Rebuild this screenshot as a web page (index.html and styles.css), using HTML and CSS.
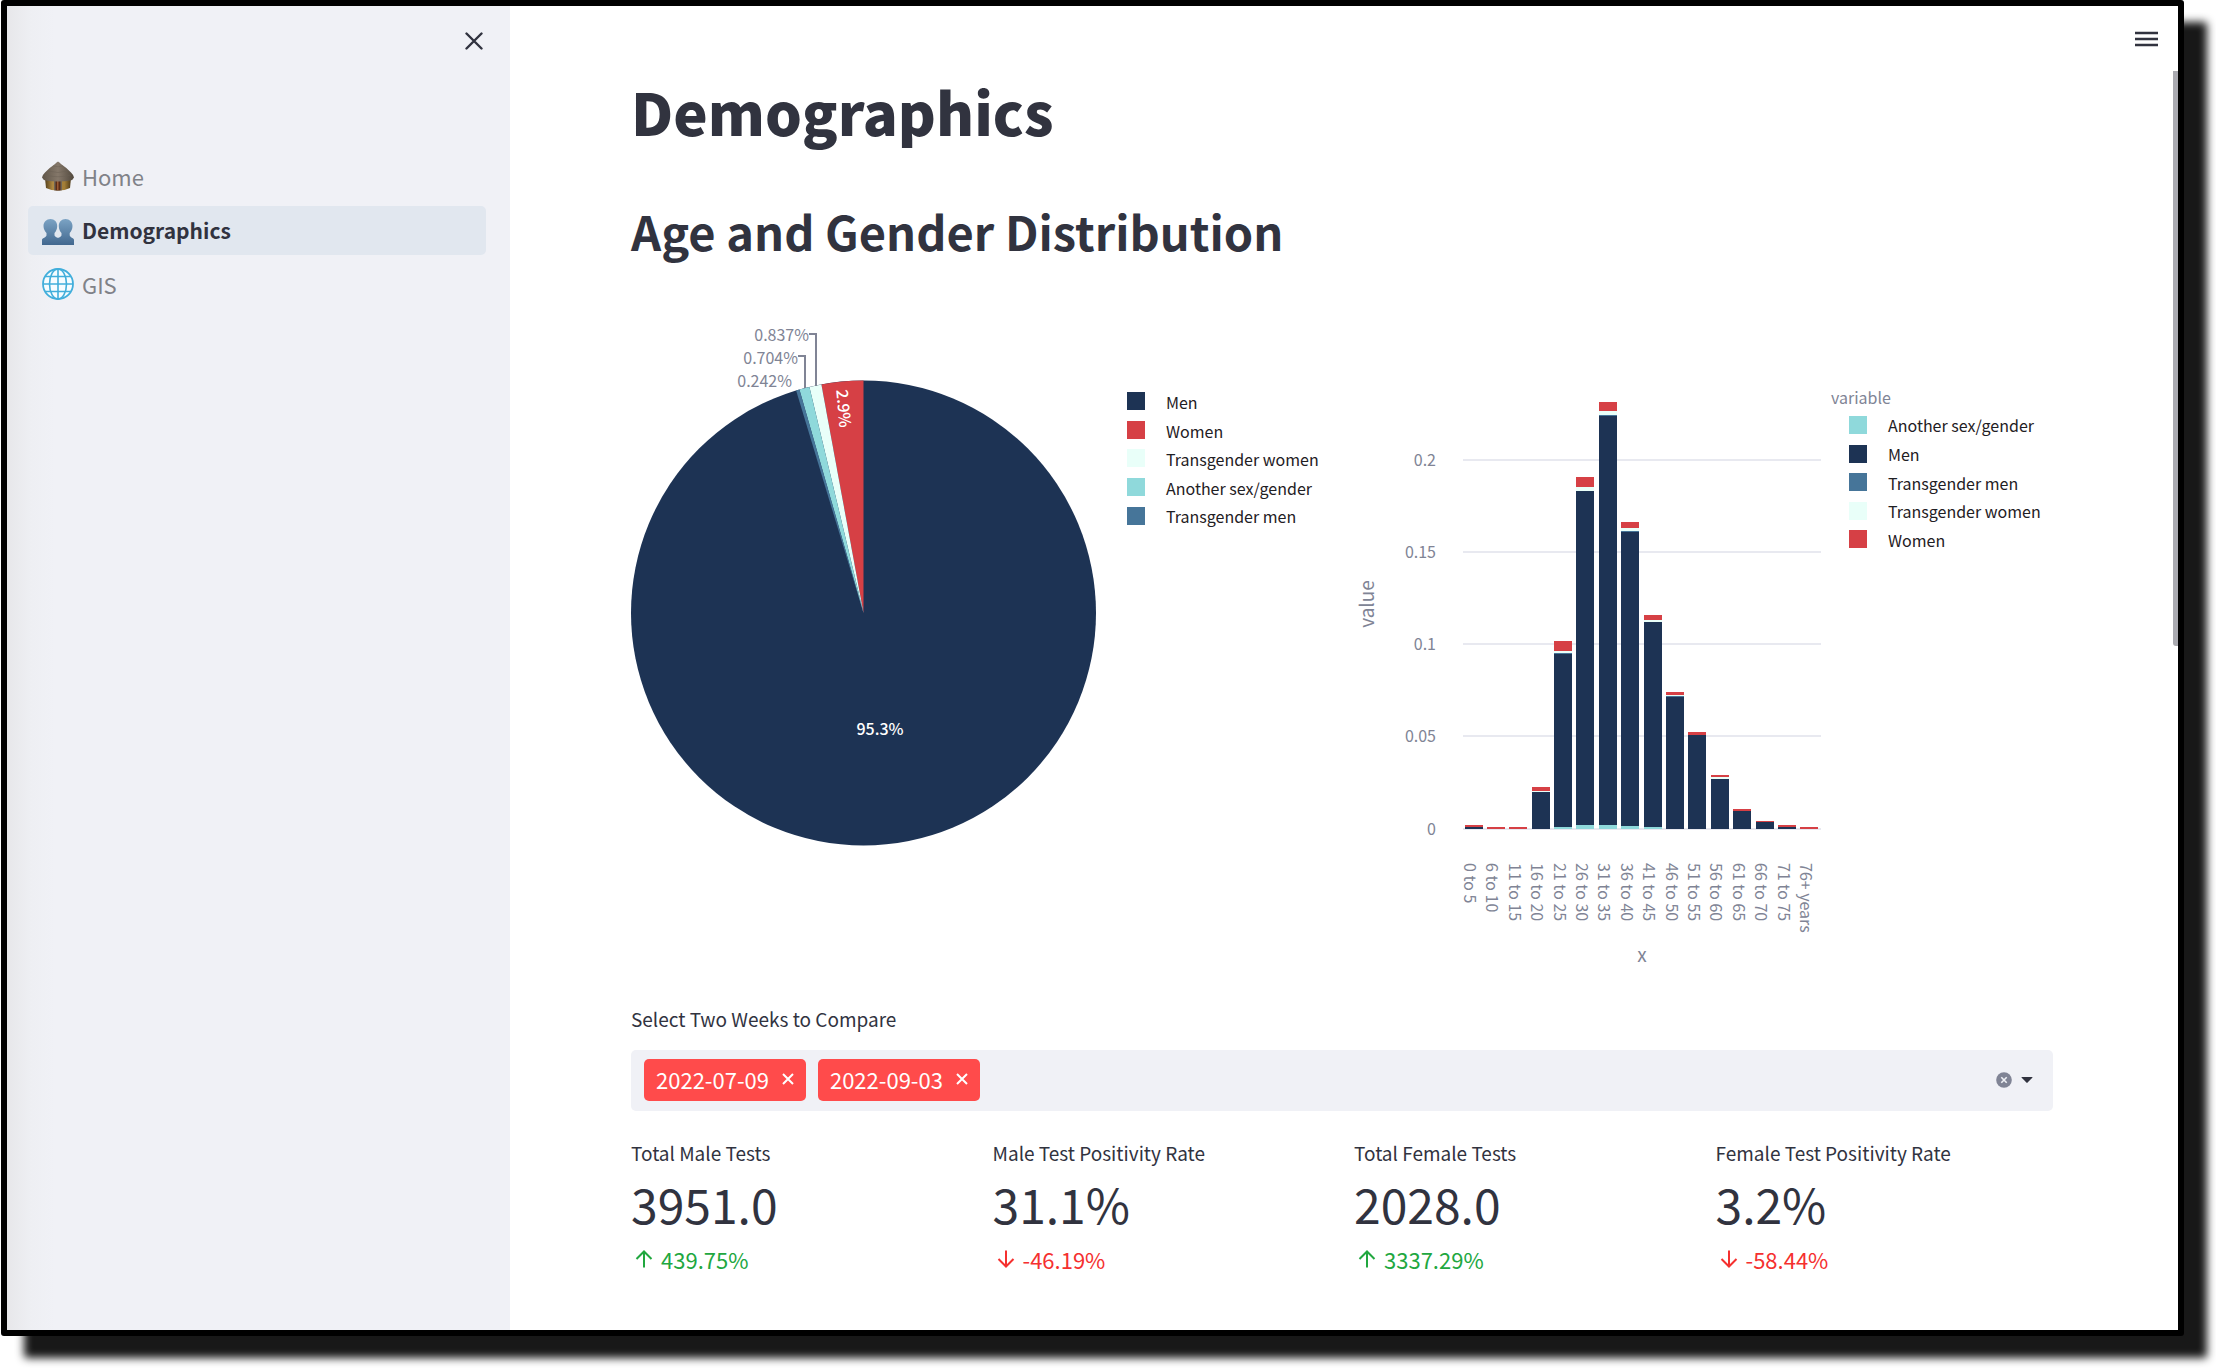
FILE: index.html
```html
<!DOCTYPE html>
<html lang="en">
<head>
<meta charset="utf-8">
<meta name="viewport" content="width=device-width, initial-scale=1">
<title>Demographics</title>
<link rel="stylesheet" href="styles.css">
</head>
<body>
<div class="window">
  <aside class="sidebar">
    <div class="sidebar-top">
      <button class="icon-button" type="button" aria-label="Close sidebar">
        <svg width="18" height="18" viewBox="0 0 18 18"><path d="M1.5 1.5l15 15M16.5 1.5l-15 15" stroke="#31333f" stroke-width="2.4" stroke-linecap="round"/></svg>
      </button>
    </div>
    <nav class="nav" aria-label="Pages">
      <a class="nav-link" href="#home">
        <svg class="nav-icon" viewBox="0 0 32 32">
          <defs>
            <linearGradient id="roof" x1="0" y1="0" x2="1" y2="0"><stop offset="0" stop-color="#5f5548"/><stop offset=".5" stop-color="#85786a"/><stop offset="1" stop-color="#51483d"/></linearGradient>
            <linearGradient id="wall" x1="0" y1="0" x2="1" y2="0"><stop offset="0" stop-color="#54401d"/><stop offset=".3" stop-color="#b08a42"/><stop offset=".75" stop-color="#a27d36"/><stop offset="1" stop-color="#4e3a18"/></linearGradient>
          </defs>
          <path d="M3 18h26l-1 10q-5 2.500-12 2.500T4 28z" fill="url(#wall)"/>
          <path d="M12 20h8v10.400h-8z" fill="#6f6557"/>
          <path d="M13.500 20h5v10.400h-5z" fill="#5a2c17"/>
          <path d="M15 21h1.500v9H15z" fill="#9c5a33"/>
          <path d="M16 1.500q2 1 3 2.500 6 4 10 8.500 3 3 3 5-1 2.500-4 3.100-5 1-12 1t-12-1Q1 20 0 17.500q0-2 3-5 4-4.500 10-8.500 1-1.500 3-2.500z" fill="url(#roof)"/>
          <path d="M11 6q5 1.500 10 0M6 11q10 3 20 0M3 15q13 3.500 26 0" fill="none" stroke="#6b6054" stroke-width=".5"/>
        </svg>
        <span>Home</span>
      </a>
      <a class="nav-link active" href="#demographics" aria-current="page">
        <svg class="nav-icon" viewBox="0 0 32 32">
          <defs><linearGradient id="bust" x1="0" y1="0" x2="0" y2="1"><stop offset="0" stop-color="#7ba3c4"/><stop offset="1" stop-color="#42688f"/></linearGradient></defs>
          <path d="M8.500 5c4 0 6.700 3 6.700 7 0 3-1.200 5.500-2.700 7v2.500c1 1.500 2.500 2 3.500 2.500 1-.5 2.500-1 3.500-2.500V19c-1.500-1.500-2.700-4-2.700-7 0-4 2.700-7 6.700-7s7 3 7 7c0 3-1.300 5.500-2.800 7v2.500c1 2.500 4.300 2.500 4.300 4.500v5H0v-5c0-2 3.500-2 4.500-4.500V19C3 17.500 1.500 15 1.500 12c0-4 3-7 7-7z" fill="url(#bust)"/>
        </svg>
        <span>Demographics</span>
      </a>
      <a class="nav-link" href="#gis">
        <svg class="nav-icon" viewBox="0 0 32 32" fill="none" stroke="#41aedb">
          <circle cx="16" cy="16" r="15" fill="#f6fcff" stroke-width="1.800"/>
          <ellipse cx="16" cy="16" rx="8.500" ry="15" stroke-width="1.600"/>
          <path d="M16 1v30M1 16h30M3.500 8.500h25M3.500 23.500h25" stroke-width="1.600"/>
        </svg>
        <span>GIS</span>
      </a>
    </nav>
  </aside>

  <main class="main">
    <button class="icon-button menu-button" type="button" aria-label="Main menu">
      <svg width="23" height="16" viewBox="0 0 23 16"><path d="M0 2h23M0 8h23M0 14h23" stroke="#31333f" stroke-width="2.400"/></svg>
    </button>
    <div class="scroll-thumb"></div>

    <h1>Demographics</h1>
    <h2>Age and Gender Distribution</h2>

    <div class="charts">
      <svg class="chart" viewBox="0 0 699 660" role="img" aria-label="Share of tests by gender">
        <circle class="men" cx="232.500" cy="293" r="232.500"/>
        <path class="women" d="M232.500 293L190.400 64.400A232.500 232.500 0 0 1 232.500 60.500z"/>
        <path class="trans-women" d="M232.500 293L178.400 66.900A232.500 232.500 0 0 1 190.400 64.400z"/>
        <path class="another" d="M232.500 293L168.400 69.500A232.500 232.500 0 0 1 178.400 66.900z"/>
        <path class="trans-men" d="M232.500 293L165.100 70.500A232.500 232.500 0 0 1 168.400 69.500z"/>
        <path class="leader" d="M178 14h7v52M167 36h7v32"/>
        <g class="tick" text-anchor="end">
          <text x="178" y="21">0.837%</text>
          <text x="167" y="44">0.704%</text>
          <text x="161" y="67">0.242%</text>
        </g>
        <g class="slice-label" text-anchor="middle">
          <text x="249" y="415">95.3%</text>
          <text transform="translate(207 89) rotate(85)">2.9%</text>
        </g>
        <g class="legend">
          <rect class="men" x="496" y="72" width="18" height="18"/><text x="535" y="89">Men</text>
          <rect class="women" x="496" y="101" width="18" height="18"/><text x="535" y="118">Women</text>
          <rect class="trans-women" x="496" y="129" width="18" height="18"/><text x="535" y="146">Transgender women</text>
          <rect class="another" x="496" y="158" width="18" height="18"/><text x="535" y="175">Another sex/gender</text>
          <rect class="trans-men" x="496" y="187" width="18" height="18"/><text x="535" y="203">Transgender men</text>
        </g>
      </svg>

      <svg class="chart" viewBox="0 0 699 660" role="img" aria-label="Age distribution by gender">
        <path class="grid" d="M109 140h358M109 232h358M109 324h358M109 416h358M109 509h358"/>
        <path class="men" d="M111 507h18v2h-18zM178 472h18v37h-18zM200 334h18v173h-18zM222 171h18v334h-18zM245 96h18v409h-18zM267 212h18v294h-18zM290 302h18v205h-18zM312 377h18v132h-18zM334 415h18v94h-18zM357 459h18v50h-18zM379 490h18v19h-18zM402 502h18v7h-18zM424 507h18v2h-18z"/>
        <path class="another" d="M200 507h18v2h-18zM222 505h18v4h-18zM245 505h18v4h-18zM267 506h18v3h-18zM290 507h18v2h-18z"/>
        <path class="trans-men" d="M200 333h18v1h-18zM245 95h18v1h-18zM267 211h18v1h-18zM312 376h18v1h-18z"/>
        <path class="trans-women" d="M178 471h18v1h-18zM200 331h18v2h-18zM222 167h18v4h-18zM245 91h18v4h-18zM267 208h18v3h-18zM290 300h18v2h-18zM312 375h18v1h-18zM357 457h18v2h-18z"/>
        <path class="women" d="M111 505h18v2h-18zM133 507h18v2h-18zM155 507h18v2h-18zM178 467h18v4h-18zM200 321h18v10h-18zM222 157h18v10h-18zM245 82h18v9h-18zM267 202h18v6h-18zM290 295h18v5h-18zM312 372h18v3h-18zM334 412h18v3h-18zM357 455h18v2h-18zM379 489h18v2h-18zM402 501h18v1h-18zM424 505h18v2h-18zM446 507h18v2h-18z"/>
        <g class="tick" text-anchor="end">
          <text x="82" y="146">0.2</text>
          <text x="82" y="238">0.15</text>
          <text x="82" y="330">0.1</text>
          <text x="82" y="422">0.05</text>
          <text x="82" y="515">0</text>
        </g>
        <g class="tick">
          <text transform="translate(110 543) rotate(90)">0 to 5</text>
          <text transform="translate(132 543) rotate(90)">6 to 10</text>
          <text transform="translate(155 543) rotate(90)">11 to 15</text>
          <text transform="translate(177 543) rotate(90)">16 to 20</text>
          <text transform="translate(200 543) rotate(90)">21 to 25</text>
          <text transform="translate(222 543) rotate(90)">26 to 30</text>
          <text transform="translate(244 543) rotate(90)">31 to 35</text>
          <text transform="translate(267 543) rotate(90)">36 to 40</text>
          <text transform="translate(289 543) rotate(90)">41 to 45</text>
          <text transform="translate(312 543) rotate(90)">46 to 50</text>
          <text transform="translate(334 543) rotate(90)">51 to 55</text>
          <text transform="translate(356 543) rotate(90)">56 to 60</text>
          <text transform="translate(379 543) rotate(90)">61 to 65</text>
          <text transform="translate(401 543) rotate(90)">66 to 70</text>
          <text transform="translate(424 543) rotate(90)">71 to 75</text>
          <text transform="translate(446 543) rotate(90)">76+ years</text>
        </g>
        <g class="axis-title" text-anchor="middle">
          <text transform="translate(20 284) rotate(-90)">value</text>
          <text x="288" y="642">x</text>
        </g>
        <text class="legend-title" x="477" y="84">variable</text>
        <g class="legend">
          <rect class="another" x="495" y="96" width="18" height="18"/><text x="534" y="112">Another sex/gender</text>
          <rect class="men" x="495" y="125" width="18" height="18"/><text x="534" y="141">Men</text>
          <rect class="trans-men" x="495" y="153" width="18" height="18"/><text x="534" y="170">Transgender men</text>
          <rect class="trans-women" x="495" y="182" width="18" height="18"/><text x="534" y="198">Transgender women</text>
          <rect class="women" x="495" y="210" width="18" height="18"/><text x="534" y="227">Women</text>
        </g>
      </svg>
    </div>

    <label class="label" for="weeks">Select Two Weeks to Compare</label>
    <div class="multiselect">
      <span class="tag">2022-07-09
        <button class="icon-button" type="button" aria-label="Remove 2022-07-09"><svg width="12" height="12" viewBox="0 0 12 12"><path d="M1 1l10 10M11 1L1 11" stroke="#fff" stroke-width="2"/></svg></button>
      </span>
      <span class="tag">2022-09-03
        <button class="icon-button" type="button" aria-label="Remove 2022-09-03"><svg width="12" height="12" viewBox="0 0 12 12"><path d="M1 1l10 10M11 1L1 11" stroke="#fff" stroke-width="2"/></svg></button>
      </span>
      <input class="multiselect-input" id="weeks" type="text" role="combobox" aria-expanded="false" autocomplete="off">
      <div class="multiselect-actions">
        <button class="icon-button" type="button" aria-label="Clear all"><svg width="16" height="16" viewBox="0 0 16 16"><circle cx="8" cy="8" r="7.800" fill="#808495"/><path d="M5.300 5.300l5.400 5.400M10.700 5.300l-5.400 5.400" stroke="#f0f2f6" stroke-width="1.600"/></svg></button>
        <button class="icon-button" type="button" aria-label="Open"><svg width="12" height="6" viewBox="0 0 12 6"><path d="M1 0h10q1 0 .3 .8L6.600 5.600q-.6 .6-1.200 0L.7 .8Q0 0 1 0z" fill="#31333f"/></svg></button>
      </div>
    </div>

    <section class="metrics">
      <div class="metric">
        <div class="label">Total Male Tests</div>
        <div class="value">3951.0</div>
        <div class="delta up"><svg width="18" height="18" viewBox="0 0 18 18"><path d="M9 17.500V1.500M1.500 9L9 1.500 16.500 9"/></svg>439.75%</div>
      </div>
      <div class="metric">
        <div class="label">Male Test Positivity Rate</div>
        <div class="value">31.1%</div>
        <div class="delta down"><svg width="18" height="18" viewBox="0 0 18 18"><path d="M9 .5v16M1.500 9L9 16.500 16.500 9"/></svg>-46.19%</div>
      </div>
      <div class="metric">
        <div class="label">Total Female Tests</div>
        <div class="value">2028.0</div>
        <div class="delta up"><svg width="18" height="18" viewBox="0 0 18 18"><path d="M9 17.500V1.500M1.500 9L9 1.500 16.500 9"/></svg>3337.29%</div>
      </div>
      <div class="metric">
        <div class="label">Female Test Positivity Rate</div>
        <div class="value">3.2%</div>
        <div class="delta down"><svg width="18" height="18" viewBox="0 0 18 18"><path d="M9 .5v16M1.500 9L9 16.500 16.500 9"/></svg>-58.44%</div>
      </div>
    </section>
  </main>
</div>
</body>
</html>
```
FILE: styles.css
```css
* { box-sizing: border-box; }

body {
  margin: 0;
  background: #fff;
  color: #31333f;
  font-family: "Noto Sans CJK SC", "Open Sans", sans-serif;
  font-size: 20px;
}

.window {
  display: flex;
  min-height: calc(100vh - 32px);
  margin: 0 32px 32px 1px;
  border: 6px solid #000;
  border-radius: 3px;
  background: #fff;
  box-shadow: 23px 22px 8px #181818;
}

.icon-button {
  display: flex;
  align-items: center;
  justify-content: center;
  padding: 0;
  border: 0;
  background: none;
  cursor: pointer;
}

/* Sidebar */
.sidebar {
  flex: 0 0 503px;
  padding: 0 24px 24px 21px;
  background: linear-gradient(90deg, #e7e7ea 0, #eeeff3 24px, #f0f1f6 48px);
}

.sidebar-top {
  display: flex;
  justify-content: flex-end;
  height: 146px;
  padding: 26px 3px 0 0;
}

.sidebar-top .icon-button { height: 18px; }

.nav {
  display: flex;
  flex-direction: column;
  gap: 5px;
}

.nav-link {
  display: flex;
  align-items: center;
  gap: 8px;
  height: 49px;
  padding: 0 0 2px 14px;
  border-radius: 5px;
  color: #808288;
  font-size: 22px;
  line-height: 32px;
  text-decoration: none;
}

.nav-link.active {
  background: #e1e7ef;
  color: #31333f;
  font-size: 21px;
  font-weight: 700;
}

.nav-icon {
  width: 32px;
  height: 32px;
}

/* Main column */
.main {
  position: relative;
  flex: 1;
  min-width: 0;
  padding: 69px 125px 48px 121px;
}

.menu-button {
  position: absolute;
  top: 25px;
  right: 20px;
}

.scroll-thumb {
  position: absolute;
  top: 65px;
  right: 0;
  width: 5px;
  height: 575px;
  border-radius: 0 0 0 3px;
  background: #a9a9af;
}

h1, h2 { margin: 0; }

h1 {
  font-size: 58px;
  font-weight: 900;
  line-height: 72px;
}

h2 {
  margin-top: 52px;
  font-size: 47px;
  font-weight: 700;
  line-height: 64px;
}

.charts {
  display: grid;
  grid-template-columns: 1fr 1fr;
  gap: 24px;
  margin: 57px 0 25px;
}

.chart {
  display: block;
  width: 100%;
  overflow: visible;
}

.men { fill: #1d3354; }
.women { fill: #d64045; }
.trans-women { fill: #e9fff9; }
.another { fill: #8fd9db; }
.trans-men { fill: #467599; }

.leader { fill: none; stroke: #808495; stroke-width: 2; }
.grid { stroke: #e8e9f0; stroke-width: 2; }
.tick { fill: #808495; font-size: 16px; }
.slice-label { fill: #fff; font-size: 16px; font-weight: 500; }
.legend text { fill: #1f2024; font-size: 16px; }
.legend-title { fill: #808495; font-size: 16px; }
.axis-title { fill: #808495; font-size: 19px; }

.label {
  display: block;
  font-size: 19px;
  line-height: 28px;
}

.multiselect {
  display: flex;
  align-items: center;
  gap: 12px;
  height: 61px;
  margin: 17px 0 28px;
  padding: 0 20px 1px 13px;
  border-radius: 5px;
  background: #f0f1f6;
}

.tag {
  display: flex;
  align-items: center;
  gap: 13px;
  height: 42px;
  padding: 0 12px 2px;
  border-radius: 5px;
  background: #ff4b4b;
  color: #fff;
  font-size: 22px;
  line-height: 32px;
}

.multiselect-input {
  flex: 1;
  min-width: 0;
  border: 0;
  outline: 0;
  background: none;
  font: inherit;
}

.multiselect-actions {
  display: flex;
  align-items: center;
  gap: 9px;
}

.metrics {
  display: grid;
  grid-template-columns: repeat(4, 1fr);
  gap: 24px;
}

.value {
  margin: 6px 0 10px;
  font-size: 48px;
  line-height: 60px;
}

.delta {
  display: flex;
  align-items: center;
  gap: 8px;
  padding-left: 4px;
  font-size: 22px;
  line-height: 32px;
}

.delta svg {
  fill: none;
  stroke: currentColor;
  stroke-width: 2;
}

.up { color: #21a73f; }
.down { color: #f5302f; }
```
